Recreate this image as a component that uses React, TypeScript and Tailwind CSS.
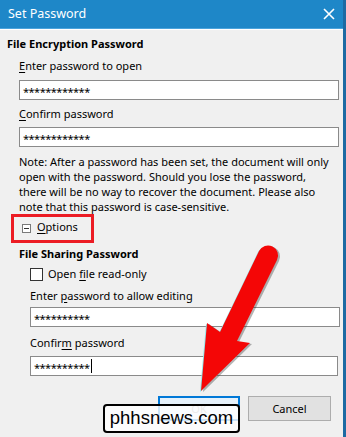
import React from "react";

const font = { fontFamily: '"Noto Sans", "Open Sans", sans-serif' };

function Field({ value, caret }: { value: string; caret?: boolean }) {
  return (
    <div className="h-[20px] bg-white border border-[#8a8a8a] flex items-center pl-[3px] text-[11px] leading-none tracking-[-0.5px]">
      <span className="pt-[3px]">{value}</span>
      {caret && <span className="ml-[1px] w-[1px] h-[14px] bg-black" />}
    </div>
  );
}

function U({ children }: { children: React.ReactNode }) {
  return <span className="underline underline-offset-2">{children}</span>;
}

function Arrow() {
  const d =
    "M259 251 L220 332 L207 323 L201 391 L250 343 L237 341 L277 260 A10 10 0 0 0 259 251 Z";
  return (
    <svg className="absolute left-0 top-0 pointer-events-none" width="346" height="437" viewBox="0 0 346 437">
      <path d={d} fill="#2a2a2a" opacity="0.35" transform="translate(2 1)" />
      <path d={d} fill="#8ee8ec" transform="translate(-1 1)" />
      <path d={d} fill="#f40606" />
    </svg>
  );
}

export default function App() {
  return (
    <div className="relative w-[346px] h-[437px] overflow-hidden bg-[#f0f0f0] text-black" style={font}>
      <div className="border-r-[3px] border-[#1d6aa3] h-full flex flex-col">
        {/* title bar */}
        <div className="h-[29px] bg-[#1e87c8] flex items-center justify-between pl-[8px] pr-[6px] border-b border-[#4aa3dc]">
          <span className="text-white text-[12.5px] leading-none">Set Password</span>
          <svg width="12" height="12" viewBox="0 0 12 12" className="mr-[2px]">
            <path d="M1 1 L11 11 M11 1 L1 11" stroke="white" strokeWidth="1.6" />
          </svg>
        </div>
        <div className="h-[1px] bg-white" />

        <div className="pl-[7px] pr-[4px] text-[11px] leading-[16px]">
          <div className="mt-[6px] font-bold">File Encryption Password</div>

          <div className="pl-[12px]">
            <div className="mt-[6px]">
              <U>E</U>nter password to open
            </div>
            <div className="mt-[6px]">
              <Field value="************" />
            </div>
            <div className="mt-[6px]">
              <U>C</U>onfirm password
            </div>
            <div className="mt-[5px]">
              <Field value="************" />
            </div>
            <div className="mt-[7px] leading-[15px] whitespace-nowrap">
              Note: After a password has been set, the document will only
              <br />
              open with the password. Should you lose the password,
              <br />
              there will be no way to recover the document. Please also
              <br />
              note that this password is case-sensitive.
            </div>
          </div>

          <div className="ml-[4px] w-[83px] h-[29px] border-[3px] border-[#ec1c24] flex items-center pl-[8px] gap-[6px]">
            <span className="w-[9px] h-[9px] border border-[#7a7a7a] bg-white flex items-center justify-center">
              <span className="w-[5px] h-[1px] bg-[#333]" />
            </span>
            <span className="-mt-[3px]">
              <U>O</U>ptions
            </span>
          </div>

          <div className="pl-[12px]">
            <div className="mt-[3px] font-bold">File Sharing Password</div>
            <div className="pl-[11px]">
              <div className="mt-[4px] flex items-center gap-[5px]">
                <span className="w-[13px] h-[13px] border border-[#333] bg-white" />
                <span>
                  Open <U>f</U>ile read-only
                </span>
              </div>
              <div className="mt-[6px]">
                Enter <U>p</U>assword to allow editing
              </div>
              <div className="mt-[3px] mr-[-1px]">
                <Field value="**********" />
              </div>
              <div className="mt-[8px]">
                Confir<U>m</U> password
              </div>
              <div className="mt-[5px] mr-[1px]">
                <Field value="**********" caret />
              </div>
            </div>
          </div>

          <div className="mt-[20px] flex justify-end gap-[8px] pr-[8px]">
            <div className="w-[82px] h-[25px] border-2 border-[#0078d7] bg-[#e5f1fb] flex items-center justify-center text-[#9a9a9a]">
              OK
            </div>
            <div className="w-[83px] h-[25px] border border-[#adadad] bg-[#e1e1e1] flex items-center justify-center">
              Cancel
            </div>
          </div>
        </div>
      </div>

      <Arrow />

      <div
        className="absolute left-[103px] top-[404px] w-[137px] h-[29px] border-2 border-black rounded-[4px] bg-white/80 flex items-center justify-center text-[18.5px] leading-none"
        style={{ fontFamily: '"Liberation Sans", Arial, sans-serif' }}
      >
        phhsnews.com
      </div>
    </div>
  );
}
